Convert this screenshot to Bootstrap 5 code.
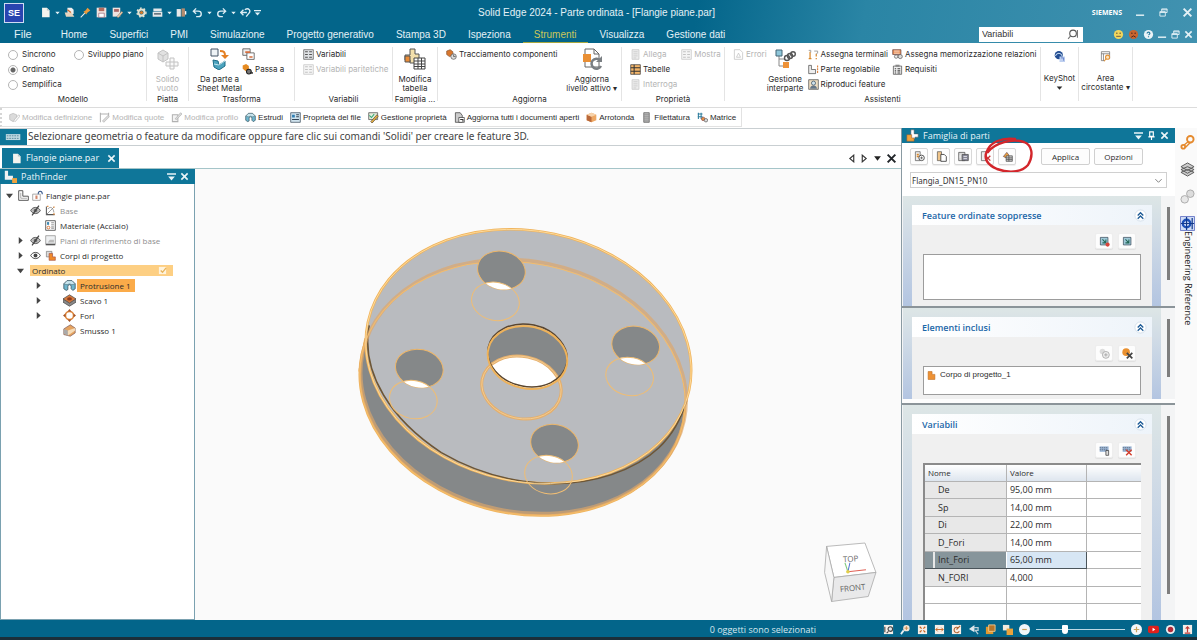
<!DOCTYPE html>
<html lang="it">
<head>
<meta charset="utf-8">
<meta name="viewport" content="width=device-width, initial-scale=1">
<title>Solid Edge 2024 - Parte ordinata - [Flangie piane.par]</title>
<link href="https://cdn.jsdelivr.net/npm/bootstrap@5.3.0/dist/css/bootstrap.min.css" rel="stylesheet">
<script src="https://cdn.jsdelivr.net/npm/bootstrap@5.3.0/dist/js/bootstrap.bundle.min.js"></script>
<style>
:root{--teal:#0f7699;--deep:#03658a;--ui:"Open Sans","Noto Sans",sans-serif;--rib:Inter,"Liberation Sans",sans-serif}
body{font:8px/15px var(--ui);color:#2b2b2b;background:#fff;height:100vh;min-height:600px;overflow:hidden}
svg{display:block;flex:none}
button{font:inherit;color:inherit;background:none;border:0;padding:0;line-height:inherit}
a{color:inherit;text-decoration:none}
.i9{width:9px;height:9px}.i11{width:11px;height:11px}.i13{width:13px;height:13px}.i20{width:22px;height:22px}
.dim{color:#b4b4b4}
.dim svg{opacity:.35;filter:grayscale(1)}
/* title bar */
.topbar{background:linear-gradient(100deg,#03658a 0 58%,#2a85a5 72%,#4192b0 100%);color:#e4f1f6;font-family:"Liberation Sans",sans-serif}
.title-row{height:25px}
.tab-row{height:18px;font-size:10px}
.side{flex:1 1 0}
.logo{width:20px;height:20px;margin-left:4px;background:#2945b0;border:1px solid #cfdcf3;color:#fff;font:bold 9px/19px "Liberation Sans",sans-serif;text-align:center}
.quick{padding-left:13px}
.quick button{width:16px;display:flex;justify-content:center}
.quick .car{width:8px}
.apptitle{font-size:10px;line-height:25px}
.tab-row nav a{padding:0 11px;line-height:19px;height:19px;white-space:nowrap}
.tab-row nav .file{font-size:11px;padding:0 18px 0 14px}
.tab-row nav .on{color:#c9c65a;box-shadow:inset 0 -2px #a9a83f;margin:0 1px}
.search{width:104px;height:15px;background:#fff;margin-right:30px}
.search input{width:84px;border:0;background:none;font:9px/15px "Liberation Sans",sans-serif;color:#333;padding:0 0 0 3px;outline:0}
.siemens{font:bold 7px/15px "Open Sans",sans-serif;color:#fff}
.winbtns{gap:14px}
/* ribbon */
.ribbon{height:65px;font-family:var(--rib);border-bottom:1px solid #dcdcdc;background:#fff}
.grp{display:flex;flex-direction:column;flex:none;margin:4px 0 6px;border-right:1px solid #e4e4e4}
.grp .gbody{height:47px;display:flex;flex:none}
.grp .glabel{flex:none;line-height:10px;text-align:center;white-space:nowrap}
.rowbtn{display:flex;align-items:center;gap:2px;height:15px;line-height:15px;white-space:nowrap}
.bigbtn{display:flex;flex-direction:column;align-items:center;line-height:9px;white-space:nowrap}
.bigbtn svg{margin:1px 0 5px}
.opt{display:flex;align-items:center;gap:4px;height:15px;white-space:nowrap}
.opt input{appearance:none;width:10px;height:10px;margin:0;border:1px solid #b4b4b4;border-radius:50%;background:#fff}
.opt input:checked{background:radial-gradient(#666 0 2px,#fff 3px)}
/* command strip */
.cmds{height:20px;font-family:"Liberation Sans",sans-serif}
.cmds .strip{display:inline-flex;align-items:center;gap:7px;height:19px;padding:1px 5px 0 7px;border:1px solid #e2e2e2;border-top:0;border-left:2px dotted #d5d5d5}
.cmds button{display:flex;align-items:center;gap:2px;white-space:nowrap}
/* prompt & tabs */
.prompt{height:18px;border:1px solid #c9cfd2;border-width:1px 0;font:10px/15px "Noto Sans",sans-serif;color:#444}
.prompt .cap{width:27px;background:var(--teal);margin:0 1px 0 0}
.doctabs{height:23px;padding:2px 4px 0 2px;border-bottom:1px solid #a5c5c9}
.doctab{width:117px;background:var(--teal);color:#e8f4f8;font:9px/20px "Noto Sans",sans-serif;padding:0 3px 0 9px}
.phead{height:15px;background:var(--teal);color:#e8f4f8;font-size:9px;line-height:15px;padding:0 6px 0 4px;flex:none}
/* tree */
.finder{width:195px;border:1px solid #7aa1b0;border-top:0;flex:none;background:#fff}
.finder .phead{margin:0 -1px}
.tree{list-style:none;margin:0;padding:4px 0 0 4px}
.tree li{display:flex;align-items:center;height:15px;gap:4px;white-space:nowrap}
.tree li.l0{gap:3px;margin-left:-1px}
.tree .arr{width:11px;display:flex;justify-content:center;flex:none}
.tree .off{color:#8e8e8e}
.l1{padding-left:10px}.l2{padding-left:28px}
.ordbar{flex:none;width:143px;height:11px;line-height:11px;background:#fdcf83;padding:0 6px 0 2px}
.sel{background:#fbab49;padding:0 4px 0 3px;margin-left:-3px;line-height:13px}
.stage{background:#fafafa}
/* right panel */
.family{width:274px;flex:none;border-left:1px solid #8a9aa2;background:#fdfdfd}
.ptools{padding:5px 8px 8px}
.pick-row{margin-top:7px}
.sq{width:18px;height:17px;border:1px solid #d8d8d8;border-radius:2px;background:#fdfdfd;display:flex;align-items:center;justify-content:center;box-shadow:0 1px 1px #0001}
.wide{width:49px;height:17px;border:1px solid #d0d0d0;border-radius:2px;background:#fdfdfd;line-height:15px;text-align:center}
.wide.last{margin-right:24px}
.combo{width:100%;height:16px;border:1px solid #d0d0d0;background:#fff;font:8px/13px "Noto Sans",sans-serif;color:#333;padding:0 1px;appearance:none}
.sect{display:flex;border-top:2px solid #8b9499;padding-left:1px;background:#f3f4f5}
.sect .well{flex:1;background:linear-gradient(#dde6e6,#d0dbe6 35%,#b3c5e1);padding:9px 9px 0}
.sect .pane{background:#f0f0f0;height:100%;padding:0 11px 4px}
.sect .pane h2{margin:0 -11px;padding:0 5px 0 10px;height:20px;font:600 9px/21px var(--ui);color:#1b67a8;background:linear-gradient(90deg,#fff,#eef4fa);display:flex;justify-content:space-between;align-items:center}
.tools{display:flex;justify-content:flex-end;gap:5px;padding:8px 5px 5px 0}
.tools .sq{border-color:#eee;height:16px}
.lst{border:1px solid #9c9c9c;background:#fff;padding:0 3px;font-family:"Liberation Sans",sans-serif}
.rail{width:14px;display:flex;justify-content:center;padding-top:11px}
.rail i{width:3px;background:#7e7e7e}
.vars{width:100%;table-layout:fixed;border-collapse:collapse;font-size:9px;line-height:15px;background:#fff;border-left:2px solid #8b8b8b;border-top:2px solid #8b8b8b}
.vars th{font-weight:400;font-size:8px;background:linear-gradient(#fff,#dde5ee);height:17px}
.vars th,.vars td{border-right:1px solid #b4b4b4;border-bottom:1px solid #b4b4b4;padding:0 3px}
.vars th:last-child,.vars td:last-child{border-right:0}
.vars td{height:17px}.vars tr:nth-child(even) td{height:18px}
.vars td:first-child{background:#e8e8e8;padding-left:13px}
.vars .void td:first-child{background:#fff}
.vars .pick td{background:#d7e6f4;border:1px solid #4a545a}
.vars .pick td:first-child{background:#87959b;background:linear-gradient(90deg,#87959b 8px,#e8e8e8 8px 10px,#87959b 10px);border-right-color:#fff}
.vars .pick td:last-child{background:#fff;border-color:#b4b4b4;border-right:0}
.dock{width:22px;flex:none;background:#fafafa;padding:7px 0 0 3px}
.vert{writing-mode:vertical-rl;font-size:9px;line-height:12px;white-space:nowrap;color:#222}
/* status */
.status{height:17px;background:var(--deep);padding-top:2px;color:#d7e8ef;font-size:9px;line-height:15px;flex:none}
.status .picks{gap:6px;margin:0 0 0 67px}
.foot{height:3px;background:#1b2f3a;flex:none}
.zoomer{appearance:none;width:89px;height:11px;background:linear-gradient(#bcd9e5,#bcd9e5) center/100% 1px no-repeat;margin:0}
.zoomer::-webkit-slider-thumb{appearance:none;width:6px;height:9px;background:#fff;border-radius:1px 1px 3px 3px}
</style>
</head>
<body class="d-flex flex-column">
<svg width="0" height="0" class="position-absolute" aria-hidden="true">
<symbol id="doc" viewBox="0 0 16 16"><path d="M3 1h7l4 4v10H3z" fill="#f4f4ee"/><path d="M10 1v4h4z" fill="#b9c4c8"/></symbol>
<symbol id="open" viewBox="0 0 16 16"><path d="M5 1h6l3 3v6H5z" fill="#eee"/><path d="M1 8h10l4 6H3z" fill="#e8d4bd"/><path d="M5 4l5 4" stroke="#d06a2d" stroke-width="2"/></symbol>
<symbol id="pin" viewBox="0 0 16 16"><path d="M1 15l6-6" stroke="#eee" stroke-width="1.5"/><path d="M5 7l4 4 2-3 4-3-4-4-3 4z" fill="#eb9b3c"/></symbol>
<symbol id="save" viewBox="0 0 16 16"><path d="M1 1h14v14H1z" fill="#efe3df"/><path d="M4 1h8v5H4z" fill="#b66b5e"/><path d="M4 9h8v6H4z" fill="#fff" stroke="#967" /></symbol>
<symbol id="saveas" viewBox="0 0 16 16"><path d="M1 1h11v13H1z" fill="#efe3df"/><path d="M3 3h7v4H3z" fill="#a66"/><path d="M7 14l7-8 2 2-7 8z" fill="#e9c6a2" stroke="#555" stroke-width=".6"/></symbol>
<symbol id="gear" viewBox="0 0 16 16"><circle cx="8" cy="8" r="4.500" fill="none" stroke="#e6e3d2" stroke-width="3"/><circle cx="8" cy="8" r="6.500" fill="none" stroke="#e6e3d2" stroke-width="2" stroke-dasharray="2.5 3"/><circle cx="8" cy="8" r="2.3" fill="#d97b2a"/></symbol>
<symbol id="print" viewBox="0 0 16 16"><path d="M2 2h12v4H2zM1 7h14v7H1z" fill="#e4e8ea"/><path d="M3 9h10v2H3z" fill="#4a5a66"/></symbol>
<symbol id="book" viewBox="0 0 16 16"><path d="M1 3h6v11H1z" fill="#e9e9e9"/><path d="M8 2h5v12H8z" fill="#b58b6d"/><path d="M13 6h2v5h-2z" fill="#fff"/></symbol>
<symbol id="undo" viewBox="0 0 16 16"><path d="M6 2L2 6l4 4M2 6h7c6 0 6 8 0 8H6" fill="none" stroke="#dcecf3" stroke-width="2"/></symbol>
<symbol id="redo" viewBox="0 0 16 16"><path d="M10 2l4 4-4 4M14 6H7c-6 0-6 8 0 8h3" fill="none" stroke="#dcecf3" stroke-width="2"/></symbol>
<symbol id="loop" viewBox="0 0 16 16"><path d="M5 4L1 8l4 4M1 8h9M7 4c6-4 9 2 6 5l-4 5" fill="none" stroke="#dcecf3" stroke-width="2"/></symbol>
<symbol id="car" viewBox="0 0 8 8"><path d="M1.500 3h5L4 6z" fill="currentColor"/></symbol>
<symbol id="carbar" viewBox="0 0 8 8"><path d="M0 1h8v1.500H0zM1 4h6L4 7.500z" fill="currentColor"/></symbol>
<symbol id="right" viewBox="0 0 8 8"><path d="M2 0l4.500 4L2 8z" fill="#444"/></symbol>
<symbol id="down" viewBox="0 0 8 8"><path d="M0 2h8L4 7z" fill="#444"/></symbol>
<symbol id="x" viewBox="0 0 10 10"><path d="M1.500 1.500l7 7M8.500 1.500l-7 7" stroke="currentColor" stroke-width="1.800"/></symbol>
<symbol id="min" viewBox="0 0 10 10"><path d="M0 8h9" stroke="currentColor" stroke-width="1.600"/></symbol>
<symbol id="rest" viewBox="0 0 10 10"><path d="M3 4V1h6v4H7M1 4h6v5H1zM1 5h6M3 2h6" fill="none" stroke="currentColor"/></symbol>
<symbol id="mag" viewBox="0 0 10 10"><circle cx="5.500" cy="4" r="3" fill="none" stroke="#555"/><path d="M3.500 6L1 9M9.500 1v7" stroke="#777"/></symbol>
<symbol id="flat" viewBox="0 0 22 22"><path d="M1 5l5-3 5 3v6l-5 3-5-3z" fill="#aaa" stroke="#555"/><path d="M1 5l5 3 5-3M6 8v6" fill="none" stroke="#555"/><path d="M13 10h4v4h4v4h-4v3h-4v-3H9v-4h4zM13 14h4v4h-4z" fill="#eee" stroke="#555"/></symbol>
<symbol id="sheet" viewBox="0 0 22 22"><path d="M2 1h7v7H2z" fill="#eef3f6" stroke="#456"/><path d="M11 3c4 0 5 1 5 5" fill="none" stroke="#e48024" stroke-width="2"/><path d="M12 7h8l-4 4z" fill="#e48024"/><path d="M4 12l5 1 1 4 6-4v5l-6 4-5-3z" fill="#4ba3be" stroke="#1c6c87"/><path d="M5 16l5 1 6-4" fill="none" stroke="#bfe3ee"/></symbol>
<symbol id="swap" viewBox="0 0 16 16"><path d="M1 1h9v8H1z" fill="#eee" stroke="#555"/><path d="M6 6h9v8H6z" fill="#fff" stroke="#555"/><path d="M4 5h6M9 11h4" stroke="#d66d3d" stroke-width="2"/></symbol>
<symbol id="passa" viewBox="0 0 16 16"><path d="M1 2l5-2 4 3v6l-4 2-5-4z" fill="#e68b22"/><circle cx="10" cy="11" r="3.500" fill="#777" stroke="#222" stroke-width="1.500"/><path d="M12 13h4" stroke="#222" stroke-width="2"/></symbol>
<symbol id="vari" viewBox="0 0 16 16"><path d="M1 1h14v14H1z" fill="#e0e3e6" stroke="#555"/><path d="M3 4h4M3 8h4M3 12h4M9 4h4M9 8h4M9 12h4" stroke="#555" stroke-width="1.600"/></symbol>
<symbol id="table22" viewBox="0 0 22 22"><path d="M6 1h5v5h4v5h-4v4H6v-3H1V7h5z" fill="#f3e0ac" stroke="#555"/><path d="M1 8h5v6H1z" fill="#e98c38" stroke="#555"/><path d="M10 10h11v11H10z" fill="#fff" stroke="#444"/><path d="M10 13h11M10 16h11M10 18.500h11M14 10v11M17.500 10v11" stroke="#444"/></symbol>
<symbol id="trace" viewBox="0 0 16 16"><path d="M1 3l5-2 4 3v5L5 11 1 8z" fill="#d9772e" stroke="#853"/><circle cx="11" cy="11" r="4" fill="#ddd" stroke="#555"/><path d="M11 8v3h3" fill="none" stroke="#444"/></symbol>
<symbol id="update" viewBox="0 0 22 22"><path d="M4 1h9l5 5v13H4z" fill="#fff" stroke="#666"/><path d="M13 1v5h5" fill="none" stroke="#666"/><path d="M2 6h8v8H2z" fill="#e98f34"/><path d="M19 12a5 5 0 1 0 1 6" fill="none" stroke="#7a7f83" stroke-width="2.500"/><path d="M21 8v6h-6z" fill="#7a7f83"/></symbol>
<symbol id="tab3" viewBox="0 0 16 16"><path d="M1 1h14v14H1z" fill="#f4b66a" stroke="#333"/><path d="M1 5.500h14M1 10.500h14M6 1v14" stroke="#333" stroke-width="1.500"/></symbol>
<symbol id="page" viewBox="0 0 16 16"><path d="M3 1h10v14H3z" fill="#ccc" stroke="#555"/><path d="M5 4h6M5 7h6M5 10h6M5 13h4" stroke="#555"/></symbol>
<symbol id="err" viewBox="0 0 16 16"><path d="M2 1h8l4 4v10H2z" fill="#fff" stroke="#444"/><path d="M5 12l3-6 3 6z" fill="none" stroke="#444"/></symbol>
<symbol id="inter" viewBox="0 0 22 22"><path d="M5 6v12h5M5 11h6" fill="none" stroke="#888"/><path d="M2 2h6v6H2z" fill="#8fc7da" stroke="#467"/><path d="M9 14h6v6H9z" fill="#ee9238"/><circle cx="13" cy="10" r="2.500" fill="none" stroke="#555" stroke-width="1.400"/><circle cx="16" cy="8" r="2.500" fill="none" stroke="#555" stroke-width="1.400"/><circle cx="19" cy="6" r="2.300" fill="none" stroke="#555" stroke-width="1.400"/></symbol>
<symbol id="term" viewBox="0 0 16 16"><path d="M3 4v10M1 14h4M12 7v4M12 13v2" stroke="#d9892c" stroke-width="1.800"/><path d="M1 2h3v3M9 3h5v3l-2 1" fill="none" stroke="#999" stroke-width="1.300"/></symbol>
<symbol id="regol" viewBox="0 0 16 16"><path d="M1 2h4v6h6v6H1z" fill="#eee" stroke="#444"/><path d="M14 2v12" stroke="#d9772e" stroke-width="1.500" stroke-dasharray="3 1"/></symbol>
<symbol id="ripr" viewBox="0 0 16 16"><path d="M1 1h14v14H1z" fill="#f0dfc3" stroke="#444"/><circle cx="8" cy="6" r="3" fill="#cfe2ec" stroke="#345"/><path d="M3 14c0-6 10-6 10 0" fill="#678"/></symbol>
<symbol id="memo" viewBox="0 0 16 16"><path d="M1 1h12v7H1z" fill="#e98c52" stroke="#644"/><path d="M3 3h8M3 6h8" stroke="#fff"/><circle cx="6" cy="11" r="2.500" fill="#eee" stroke="#555"/><circle cx="12" cy="11" r="3" fill="#ddd" stroke="#555"/></symbol>
<symbol id="req" viewBox="0 0 16 16"><path d="M2 3h12v12H2z" fill="#eee" stroke="#444"/><path d="M5 1h6v3H5z" fill="#888"/><path d="M4 7h2M4 10h2M4 13h2M8 7h4M8 10h4M8 13h4" stroke="#444" stroke-width="1.500"/></symbol>
<symbol id="ks" viewBox="0 0 16 16"><circle cx="7" cy="6" r="6" fill="#234d92"/><path d="M2 7c3-5 7-5 10 0" fill="none" stroke="#cfe2f5" stroke-width="1.500"/><path d="M8 8h8v8H8z" fill="#bfd0f0"/><path d="M10 10h4v4" fill="none" stroke="#46b"/></symbol>
<symbol id="area" viewBox="0 0 16 16"><path d="M2 1h12v10M2 1v13h5M2 4h12M5 4v10" fill="none" stroke="#666"/><circle cx="11" cy="9" r="3" fill="#fbe5c3" stroke="#e29236" stroke-width="1.500"/><path d="M9 11l-3 4" stroke="#e29236" stroke-width="1.500"/></symbol>
<symbol id="edit" viewBox="0 0 16 16"><path d="M1 4l5-2 5 2v7l-5 3-5-3z" fill="#999" stroke="#333"/><path d="M7 12l7-8 2 2-7 8z" fill="#eee" stroke="#333"/></symbol>
<symbol id="editq" viewBox="0 0 16 16"><path d="M2 1v14M14 1v6M2 3h12" fill="none" stroke="#222" stroke-width="1.500"/><path d="M5 13l8-8 2 2-8 8z" fill="#999" stroke="#222"/></symbol>
<symbol id="editp" viewBox="0 0 16 16"><path d="M2 4h8v10H2z" fill="#ddd" stroke="#222" stroke-width="1.500"/><path d="M6 10l8-9 2 2-8 8z" fill="#999" stroke="#222"/></symbol>
<symbol id="estr" viewBox="0 0 16 16"><path d="M1 6l4-4h6l4 4v6l-3 2-2-2V9a2 2 0 0 0-4 0v4l-2 1-3-2z" fill="#6fb7cf" stroke="#3b5560"/><path d="M1 6l4-4h6l4 4-4 1q-3-2-6 0z" fill="#c8e5ee" stroke="#3b5560" stroke-width=".6"/></symbol>
<symbol id="prop" viewBox="0 0 16 16"><path d="M1 1h14v14H1z" fill="#cfe3ee" stroke="#345"/><path d="M3 4h4v4H3z" fill="#2f7fb5"/><path d="M9 4h4M9 7h4M3 11h10" stroke="#345" stroke-width="1.500"/></symbol>
<symbol id="gest" viewBox="0 0 16 16"><path d="M1 1h13v10H1z" fill="#e5ecda" stroke="#444"/><path d="M4 14l9-10 2 2-9 10z" fill="#e7b343" stroke="#543"/><path d="M2 5l3 3 4-5" fill="none" stroke="#3a7" stroke-width="1.500"/></symbol>
<symbol id="refr" viewBox="0 0 16 16"><path d="M2 1h7l3 4v10H2z" fill="#ccc" stroke="#333"/><path d="M7 8h8v7H7z" fill="#fff" stroke="#333"/><path d="M9 11h4v3" fill="none" stroke="#333" stroke-width="1.500"/></symbol>
<symbol id="round" viewBox="0 0 16 16"><path d="M1 4l7-3 7 3v8l-7 3-7-3z" fill="#eda763"/><path d="M1 4l7 3v8l-7-3z" fill="#b9683a"/><path d="M1 4l7-3 7 3-7 3z" fill="#f6d3ac"/></symbol>
<symbol id="fil" viewBox="0 0 16 16"><path d="M4 1h8v14H4z" fill="#b8b8b8" stroke="#555"/><path d="M4 4h8M4 7h8M4 10h8M4 13h8" stroke="#888"/></symbol>
<symbol id="matr" viewBox="0 0 16 16"><path d="M2 1v9M6 1v9M1 3h7M1 7h7" stroke="#2d7d9d" stroke-width="1.500"/><circle cx="9" cy="10" r="2.500" fill="#e99544" stroke="#844"/><circle cx="13" cy="12" r="2.500" fill="#ddd" stroke="#555"/></symbol>
<symbol id="fam" viewBox="0 0 16 16"><path d="M6 1h4v5h5v4h-4v2H6z" fill="#fff" stroke="#555" stroke-width=".6"/><path d="M1 7h6v4h3v4H1z" fill="#f0a33e" stroke="#853" stroke-width=".6"/></symbol>
<symbol id="pf" viewBox="0 0 16 16"><path d="M1 1h4v6h6v5H1z" fill="#f2f2f2"/><path d="M10 10h6v6h-6z" fill="#f0a33e"/></symbol>
<symbol id="part" viewBox="0 0 16 16"><path d="M1 1h6v8h8v6H1z" fill="#fff" stroke="#555" stroke-width="1.400"/><path d="M4 4v8h9" fill="none" stroke="#888"/></symbol>
<symbol id="lock" viewBox="0 0 16 16"><path d="M1 6h11v9H1z" fill="#fff" stroke="#888"/><path d="M5 8h3v5H5z" fill="#d2886d"/><path d="M9 6c0-6 6-5 6 0" fill="none" stroke="#358" stroke-width="1.500"/></symbol>
<symbol id="eye" viewBox="0 0 16 16"><path d="M1 8c3-6 11-6 14 0-3 6-11 6-14 0z" fill="#fff" stroke="#444" stroke-width="1.400"/><circle cx="8" cy="8" r="2.800" fill="#444"/></symbol>
<symbol id="eyeoff" viewBox="0 0 16 16"><path d="M1 8c3-6 11-6 14 0-3 6-11 6-14 0z" fill="#bbb" stroke="#555" stroke-width="1.400"/><circle cx="8" cy="8" r="2.500" fill="#666"/><path d="M3 15L13 1" stroke="#444" stroke-width="1.800"/></symbol>
<symbol id="base" viewBox="0 0 16 16"><path d="M2 2v12h12" fill="none" stroke="#555" stroke-width="1.500"/><path d="M2 14L13 3M4 6c4-5 8-2 9 5" fill="none" stroke="#777"/><path d="M12 2h2v2h-2zM12 12h2v2h-2zM3 1h2v2H3z" fill="#e08a3c"/></symbol>
<symbol id="mat" viewBox="0 0 16 16"><path d="M1 1h14v14H1z" fill="#fff" stroke="#555" stroke-width="1.300"/><path d="M3 3h3v4H3z" fill="#3b86b0"/><circle cx="5" cy="11" r="2" fill="none" stroke="#d66d2d" stroke-width="1.300"/><path d="M9 4h4M9 7h4M9 10h4M9 12h4" stroke="#666"/></symbol>
<symbol id="plane" viewBox="0 0 16 16"><path d="M1 1h14v12H1z" fill="#eef0f2" stroke="#888"/><path d="M1 14h14" stroke="#555" stroke-width="2"/><path d="M7 7h6v4H4z" fill="#bbb"/></symbol>
<symbol id="bodies" viewBox="0 0 16 16"><path d="M2 2h8v8H2z" fill="#ddd" stroke="#777"/><path d="M6 5h5v5h4v5H6z" fill="#ef8a2b" stroke="#a54"/></symbol>
<symbol id="body1" viewBox="0 0 16 16"><path d="M2 1h7v5h5v9H2z" fill="#ee9234" stroke="#b96a20"/></symbol>
<symbol id="scavo" viewBox="0 0 16 16"><path d="M0 6v4l8 5 8-5V6l-8 5z" fill="#8a8a8a" stroke="#555"/><path d="M0 6l8-5 8 5-8 5z" fill="#d9793c" stroke="#555"/><ellipse cx="8" cy="6" rx="3" ry="2" fill="#8f3d1b"/></symbol>
<symbol id="fori" viewBox="0 0 16 16"><circle cx="8" cy="8" r="5" fill="#fff" stroke="#e0893e" stroke-width="2"/><path d="M8 0l2.500 3h-5zM8 16l2.500-3h-5zM0 8l3-2.500v5zM16 8l-3-2.500v5z" fill="#a5562a"/></symbol>
<symbol id="smus" viewBox="0 0 16 16"><path d="M1 6l8-5 6 4v6l-6 4-8-2z" fill="#e5a360" stroke="#755" stroke-width=".8"/><path d="M1 6l5 2v6l-5-2z" fill="#aaa"/><path d="M6 8l9-3v3l-9 6z" fill="#f6dcb8"/></symbol>
<symbol id="kbd" viewBox="0 0 20 10"><path d="M1 1h17v7H1z" fill="#bfd9e2"/><path d="M2 3h15M2 6h15" stroke="#4e7f92" stroke-dasharray="2 1"/></symbol>
<symbol id="dup" viewBox="0 0 16 16"><path d="M2 1h7v13H2z" fill="#eee" stroke="#555"/><path d="M4 5h3M4 8h3" stroke="#d9892c" stroke-width="2"/><circle cx="11" cy="10" r="4" fill="#fff" stroke="#444" stroke-width="1.300"/><path d="M11 8v4M9 10h4" stroke="#444"/></symbol>
<symbol id="cpy" viewBox="0 0 16 16"><path d="M2 1h6v13H2z" fill="#f0c58a" stroke="#555"/><path d="M7 5h5l3 3v7H7z" fill="#fff" stroke="#444" stroke-width="1.300"/></symbol>
<symbol id="ren" viewBox="0 0 16 16"><path d="M1 2h9v12H1z" fill="#ddd" stroke="#444"/><path d="M6 5h9v9H6z" fill="#889" stroke="#444"/><path d="M3 6v4M8 8h5M8 11h5" stroke="#fff"/></symbol>
<symbol id="delv" viewBox="0 0 16 16"><path d="M2 1h7v13H2z" fill="#eee" stroke="#555"/><path d="M8 7l7 7M15 7l-7 7" stroke="#c33" stroke-width="2"/></symbol>
<symbol id="fillp" viewBox="0 0 16 16"><path d="M2 8l5-6 3 4-2 5z" fill="#f0a33e" stroke="#644"/><path d="M6 7h9v8H6z" fill="#ccc" stroke="#444"/><path d="M6 10h9M6 12.500h9M10 7v8" stroke="#444"/></symbol>
<symbol id="chev" viewBox="0 0 14 14"><circle cx="7" cy="7" r="6" fill="#fff" stroke="#d3dfea"/><path d="M4 7l3-3 3 3M4 10.500l3-3 3 3" fill="none" stroke="#1b5a96" stroke-width="1.400"/></symbol>
<symbol id="sup" viewBox="0 0 16 16"><path d="M2 2h11v11H2z" fill="#9fc8d8" stroke="#345"/><path d="M5 5l5 5M10 5v5H5" fill="none" stroke="#265" stroke-width="1.500"/></symbol>
<symbol id="supx" viewBox="0 0 16 16"><path d="M2 2h11v11H2z" fill="#9fc8d8" stroke="#345"/><path d="M5 5l5 5M10 5v5H5" fill="none" stroke="#265" stroke-width="1.500"/><circle cx="12.500" cy="12.500" r="3" fill="#d8443a"/></symbol>
<symbol id="bodyx" viewBox="0 0 16 16"><circle cx="6" cy="6" r="5.500" fill="#e9902f"/><path d="M7 7l8 8M15 7l-8 8" stroke="#444" stroke-width="2.500"/></symbol>
<symbol id="bodyadd" viewBox="0 0 16 16"><circle cx="5" cy="5" r="4" fill="#ddd"/><circle cx="10" cy="10" r="5" fill="#eee" stroke="#999"/><path d="M10 7.500v5M7.500 10h5" stroke="#999"/></symbol>
<symbol id="vin" viewBox="0 0 16 16"><path d="M1 2h13v8H1z" fill="#9db7d6"/><path d="M1 4h12M1 7h12" stroke="#456" stroke-dasharray="2 1"/><path d="M10 8h4v7h-4z" fill="#ddd" stroke="#333"/></symbol>
<symbol id="vdel" viewBox="0 0 16 16"><path d="M1 2h13v8H1z" fill="#9db7d6"/><path d="M1 4h12M1 7h12" stroke="#456" stroke-dasharray="2 1"/><path d="M6 7l8 8M14 7l-8 8" stroke="#d33b2a" stroke-width="2"/></symbol>
<symbol id="link" viewBox="0 0 16 16"><circle cx="11" cy="4.500" r="3.500" fill="none" stroke="#e58a2e" stroke-width="2"/><circle cx="3.500" cy="12.500" r="2" fill="none" stroke="#e58a2e" stroke-width="2"/><path d="M4 11l5-4M6 13l5-5" stroke="#e58a2e" stroke-width="1.500"/></symbol>
<symbol id="layers" viewBox="0 0 16 16"><path d="M1 11l7-3 7 3-7 4zM1 8l7-3 7 3-7 4zM1 5l7-4 7 4-7 4z" fill="#ccc" stroke="#555"/></symbol>
<symbol id="sens" viewBox="0 0 16 16"><circle cx="11" cy="5" r="4" fill="#ddd" stroke="#aaa"/><circle cx="5" cy="11" r="4" fill="#e7e7e7" stroke="#aaa"/></symbol>
<symbol id="engref" viewBox="0 0 16 16"><path d="M.5.500h15v15H.5z" fill="#cfdcf6" stroke="#6b7bc8"/><circle cx="7" cy="8" r="4" fill="none" stroke="#1c50b8" stroke-width="2.500"/><path d="M7 1v14M1 8h14M13 2v12" stroke="#123a8c" stroke-width="1.300"/></symbol>
<symbol id="wq" viewBox="0 0 12 12"><path d="M1 1h10v10H1z" fill="#f5efe8"/><path d="M3 3l2 2M9 3L7 5M3 9l2-2M9 9L7 7" stroke="#c7611e" stroke-width="1.300"/></symbol>
<symbol id="fitw" viewBox="0 0 12 12"><path d="M1 1h10v10H1z" fill="#f5efe8"/><path d="M2 6h8M4 4L2 6l2 2M8 4l2 2-2 2" fill="none" stroke="#c7611e"/></symbol>
<symbol id="magp" viewBox="0 0 12 12"><path d="M1 1h10v10H1z" fill="#f5efe8"/><circle cx="8" cy="5.500" r="2.500" fill="#dfe6ea" stroke="#444" stroke-width="1.200"/><path d="M6 8l-2 2M2 3v6" stroke="#444" stroke-width="1.200"/></symbol>
<symbol id="rotv" viewBox="0 0 12 12"><path d="M1 1h10v10H1z" fill="#f5efe8"/><path d="M8 4a3 3 0 1 0 1 4M6 6l4-4" fill="none" stroke="#b0622e" stroke-width="1.200"/></symbol>
<symbol id="magw" viewBox="0 0 12 12"><circle cx="7" cy="4.500" r="3.500" fill="#f7e7d6"/><path d="M5 4.500h4M7 2.500v4" stroke="#c98a4c"/><path d="M4 7L1 11" stroke="#e6eef1" stroke-width="2"/></symbol>
<symbol id="cubes" viewBox="0 0 12 12"><path d="M1 3h8v8H1z" fill="#e2992f"/><path d="M4 1h7v7H4z" fill="#b5752a" stroke="#f1c98e"/></symbol>
<symbol id="cubes2" viewBox="0 0 12 12"><path d="M1 1h7v6H1z" fill="#f1eadf"/><path d="M5 5h7v7H5z" fill="#eba33b"/></symbol>
<symbol id="arrl" viewBox="0 0 12 12"><path d="M7 1L1 5.500 7 9z" fill="#dfe9ee"/><path d="M6 4h5v3H8l3 4" fill="none" stroke="#b9cdd6" stroke-width="1.400"/></symbol>
</svg>

<header class="topbar flex-shrink-0">
  <div class="title-row d-flex align-items-center">
    <div class="side d-flex align-items-center">
      <div class="logo">SE</div>
      <div class="quick d-flex align-items-center" id="quick"></div>
    </div>
    <div class="apptitle">Solid Edge 2024 - Parte ordinata - [Flangie piane.par]</div>
    <div class="side winbtns d-flex align-items-center justify-content-end pe-1">
      <span class="siemens">SIEMENS</span>
      <button aria-label="Riduci"><svg class="i9"><use href="#min"/></svg></button>
      <button aria-label="Ripristina"><svg class="i9"><use href="#rest"/></svg></button>
      <button aria-label="Chiudi"><svg class="i11"><use href="#x"/></svg></button>
    </div>
  </div>
  <div class="tab-row d-flex align-items-center">
    <nav class="d-flex me-auto">
      <a href="#" class="file">File</a><a href="#">Home</a><a href="#">Superfici</a><a href="#">PMI</a><a href="#">Simulazione</a><a href="#">Progetto generativo</a><a href="#">Stampa 3D</a><a href="#">Ispeziona</a><a href="#" class="on">Strumenti</a><a href="#">Visualizza</a><a href="#">Gestione dati</a>
    </nav>
    <div class="search d-flex align-items-center"><input type="text" value="Variabili" aria-label="Cerca comando"><svg class="i11 ms-1"><use href="#mag"/></svg></div>
    <div class="d-flex align-items-center gap-1 pe-1">
      <svg class="i11" viewBox="0 0 12 12"><circle cx="6" cy="6" r="5" fill="#f1d65c"/><path d="M3.500 8h5" fill="none" stroke="#654"/><circle cx="4.200" cy="4.500" r=".8" fill="#543"/><circle cx="7.800" cy="4.500" r=".8" fill="#543"/></svg>
      <svg class="i11" viewBox="0 0 12 12"><circle cx="6" cy="6" r="5" fill="#c8652f"/><path d="M3.500 9q2.500-3 5 0" fill="none" stroke="#422"/><circle cx="4.200" cy="4.500" r=".8" fill="#422"/><circle cx="7.800" cy="4.500" r=".8" fill="#422"/></svg>
      <svg class="i11" viewBox="0 0 12 12"><circle cx="6" cy="6" r="5" fill="#eaf3f7"/><path d="M4.500 5q0-1.500 1.500-1.500T7.500 5Q7 6 6 6.500M6 8v1" fill="none" stroke="#2a7ca0" stroke-width="1.300"/></svg>
      <svg class="i9"><use href="#min"/></svg><svg class="i9"><use href="#rest"/></svg><svg class="i9"><use href="#x"/></svg>
    </div>
  </div>
</header>

<section class="ribbon d-flex flex-shrink-0" aria-label="Strumenti">
  <div class="grp" style="width:147px"><div class="gbody ps-2">
      <div class="pe-2 me-1">
        <label class="opt"><input type="radio" name="amb">Sincrono</label>
        <label class="opt"><input type="radio" name="amb" checked>Ordinato</label>
        <label class="opt"><input type="radio" name="amb">Semplifica</label>
      </div>
      <label class="opt"><input type="radio" name="amb">Sviluppo piano</label>
    </div><div class="glabel">Modello</div></div>
  <div class="grp" style="width:42px"><div class="gbody justify-content-center"><button class="bigbtn dim"><svg class="i20"><use href="#flat"/></svg>Solido<br>vuoto</button></div><div class="glabel">Piatta</div></div>
  <div class="grp" style="width:106px"><div class="gbody ps-1"><button class="bigbtn ms-1"><svg class="i20"><use href="#sheet"/></svg>Da parte a<br>Sheet Metal</button>
      <div><button class="rowbtn"><svg class="i13"><use href="#swap"/></svg></button><button class="rowbtn"><svg class="i11"><use href="#passa"/></svg>Passa a</button></div></div><div class="glabel">Trasforma</div></div>
  <div class="grp" style="width:98px"><div class="gbody ps-2"><div><button class="rowbtn"><svg class="i11"><use href="#vari"/></svg>Variabili</button><button class="rowbtn dim"><svg class="i11"><use href="#vari"/></svg>Variabili paritetiche</button></div></div><div class="glabel">Variabili</div></div>
  <div class="grp" style="width:45px"><div class="gbody justify-content-center"><button class="bigbtn"><svg class="i20"><use href="#table22"/></svg>Modifica<br>tabella</button></div><div class="glabel">Famiglia ...</div></div>
  <div class="grp" style="width:184px"><div class="gbody ps-2 justify-content-between pe-1"><button class="rowbtn"><svg class="i11"><use href="#trace"/></svg>Tracciamento componenti</button>
      <button class="bigbtn"><svg class="i20"><use href="#update"/></svg>Aggiorna<br>livello attivo ▾</button></div><div class="glabel">Aggiorna</div></div>
  <div class="grp" style="width:103px"><div class="gbody ps-2"><div><button class="rowbtn dim"><svg class="i11"><use href="#page"/></svg>Allega</button><button class="rowbtn"><svg class="i11"><use href="#tab3"/></svg>Tabelle</button><button class="rowbtn dim"><svg class="i11"><use href="#page"/></svg>Interroga</button></div>
      <div class="ms-1"><button class="rowbtn dim"><svg class="i11"><use href="#vari"/></svg>Mostra</button></div></div><div class="glabel">Proprietà</div></div>
  <div class="grp" style="width:316px"><div class="gbody ps-2"><button class="rowbtn dim"><svg class="i11"><use href="#err"/></svg>Errori</button>
      <button class="bigbtn"><svg class="i20"><use href="#inter"/></svg>Gestione<br>interparte</button>
      <div class="ms-1"><button class="rowbtn"><svg class="i11"><use href="#term"/></svg>Assegna terminali</button><button class="rowbtn"><svg class="i11"><use href="#regol"/></svg>Parte regolabile</button><button class="rowbtn"><svg class="i11"><use href="#ripr"/></svg>Riproduci feature</button></div>
      <div class="ms-1"><button class="rowbtn"><svg class="i11"><use href="#memo"/></svg>Assegna memorizzazione relazioni</button><button class="rowbtn"><svg class="i11"><use href="#req"/></svg>Requisiti</button></div></div><div class="glabel">Assistenti</div></div>
  <div class="grp" style="width:38px"><div class="gbody justify-content-center"><button class="bigbtn"><svg class="i11 mt-1 mb-2"><use href="#ks"/></svg><span class="mt-1">KeyShot</span><svg class="i9 m-0"><use href="#car"/></svg></button></div></div>
  <div class="grp" style="width:54px"><div class="gbody justify-content-center"><button class="bigbtn"><svg class="i11 mt-1 mb-2"><use href="#area"/></svg><span class="mt-1">Area<br>circostante ▾</span></button></div></div>
</section>

<div class="cmds flex-shrink-0"><div class="strip">
  <button class="dim"><svg class="i11"><use href="#edit"/></svg>Modifica definizione</button>
  <button class="dim"><svg class="i11"><use href="#editq"/></svg>Modifica quote</button>
  <button class="dim"><svg class="i11"><use href="#editp"/></svg>Modifica profilo</button>
  <button><svg class="i11"><use href="#estr"/></svg>Estrudi</button>
  <button><svg class="i11"><use href="#prop"/></svg>Proprietà del file</button>
  <button><svg class="i11"><use href="#gest"/></svg>Gestione proprietà</button>
  <button><svg class="i11"><use href="#refr"/></svg>Aggiorna tutti i documenti aperti</button>
  <button><svg class="i11"><use href="#round"/></svg>Arrotonda</button>
  <button><svg class="i11"><use href="#fil"/></svg>Filettatura</button>
  <button><svg class="i11"><use href="#matr"/></svg>Matrice</button>
</div></div>

<main class="d-flex flex-grow-1" style="min-height:0">
  <div class="d-flex flex-column flex-grow-1" style="min-width:0">
    <div class="prompt d-flex"><div class="cap d-flex align-items-center justify-content-center"><svg width="17" height="9"><use href="#kbd"/></svg></div>Selezionare geometria o feature da modificare oppure fare clic sui comandi 'Solidi' per creare le feature 3D.</div>
    <div class="doctabs d-flex">
      <div class="doctab d-flex align-items-center"><svg class="i11 me-1"><use href="#doc"/></svg>Flangie piane.par<button class="ms-auto" aria-label="Chiudi documento"><svg class="i9"><use href="#x"/></svg></button></div>
      <div class="ms-auto d-flex align-items-center gap-1">
        <svg class="i9" viewBox="0 0 8 8"><path d="M6 1v6L2.500 4z" fill="none" stroke="#333"/></svg>
        <svg class="i9" viewBox="0 0 8 8"><path d="M2 1v6l3.500-3z" fill="none" stroke="#333"/></svg>
        <svg class="i9" viewBox="0 0 8 8"><path d="M1 2h6L4 6z" fill="#222"/></svg>
        <svg class="i11 text-dark"><use href="#x"/></svg>
      </div>
    </div>
    <div class="d-flex flex-grow-1" style="min-height:0">
      <aside class="finder">
        <div class="phead d-flex align-items-center"><svg class="i13"><use href="#pf"/></svg><span class="ms-1">PathFinder</span><svg class="i9 ms-auto me-1"><use href="#carbar"/></svg><svg class="i9"><use href="#x"/></svg></div>
        <ul class="tree">
          <li class="l0"><span class="arr"><svg width="7" height="7"><use href="#down"/></svg></span><svg class="i11"><use href="#part"/></svg><svg class="i11"><use href="#lock"/></svg><span>Flangie piane.par</span></li>
          <li class="l1 off"><span class="arr"></span><svg class="i11"><use href="#eyeoff"/></svg><svg class="i11"><use href="#base"/></svg>Base</li>
          <li class="l1"><span class="arr"></span><span class="i11"></span><svg class="i11"><use href="#mat"/></svg>Materiale (Acciaio)</li>
          <li class="l1 off"><span class="arr"><svg width="7" height="7"><use href="#right"/></svg></span><svg class="i11"><use href="#eyeoff"/></svg><svg class="i11"><use href="#plane"/></svg>Piani di riferimento di base</li>
          <li class="l1"><span class="arr"><svg width="7" height="7"><use href="#right"/></svg></span><svg class="i11"><use href="#eye"/></svg><svg class="i11"><use href="#bodies"/></svg>Corpi di progetto</li>
          <li class="l1"><span class="arr"><svg width="7" height="7"><use href="#down"/></svg></span><span class="ordbar d-flex align-items-center">Ordinato<svg class="i9 ms-auto" viewBox="0 0 10 10"><path d="M1 1h8v8H1z" fill="#fff3dc"/><path d="M3 5l2 2 4-5" fill="none" stroke="#e8b45c" stroke-width="1.500"/></svg></span></li>
          <li class="l2"><span class="arr"><svg width="7" height="7"><use href="#right"/></svg></span><span class="i11"></span><svg class="i13"><use href="#estr"/></svg><span class="sel">Protrusione 1</span></li>
          <li class="l2"><span class="arr"><svg width="7" height="7"><use href="#right"/></svg></span><span class="i11"></span><svg class="i13"><use href="#scavo"/></svg>Scavo 1</li>
          <li class="l2"><span class="arr"><svg width="7" height="7"><use href="#right"/></svg></span><span class="i11"></span><svg class="i13"><use href="#fori"/></svg>Fori</li>
          <li class="l2"><span class="arr"></span><span class="i11"></span><svg class="i13"><use href="#smus"/></svg>Smusso 1</li>
        </ul>
      </aside>
      <div class="stage flex-grow-1" style="min-width:0">
        <svg width="100%" height="100%" viewBox="196 169 705 450" role="img" aria-label="Flangia">
          <defs>
            <ellipse id="big" rx="164" ry="125" transform="rotate(12)"/>
            <ellipse id="mid" rx="40" ry="31" transform="rotate(12)"/>
            <ellipse id="bolt" rx="24" ry="19" transform="rotate(12)"/>
            <clipPath id="cm"><use href="#mid" x="528" y="357"/></clipPath>
            <clipPath id="cb"><use href="#bolt"/></clipPath>
            <g id="hole"><use href="#bolt" fill="#858889" stroke="#edb669"/><g clip-path="url(#cb)"><use href="#bolt" x="-6" y="31" fill="#fff"/></g><use href="#bolt" x="-6" y="31" fill="none" stroke="#efbd74"/></g>
          </defs>
          <path d="M365.500 338L359.500 369L685 405L691.500 374z" fill="#858889"/>
          <use href="#big" x="523" y="388" fill="#858889" stroke="#f0b45c" stroke-width="2.500"/>
          <path d="M365.500 338L359.500 371M691.500 374L686 405" stroke="#f0b45c"/>
          <use href="#big" x="529" y="356" fill="#b9bbbf" stroke="#f0b45c" stroke-width="2.500"/>
          <path d="M370 325C361 373 393 420 442 452C490 480 555 493 612 474C650 461 675 440 687 400" fill="none" stroke="#6d5636" stroke-width="1.500"/>
          <g fill="none"><use href="#big" x="524" y="386" stroke="#dfa76a" stroke-width="3.500" opacity=".65"/><use href="#big" x="523" y="388" stroke="#f3bc6c"/><use href="#big" x="529" y="356" stroke="#ffe0a6" stroke-width=".8"/></g>
          <use href="#hole" x="502" y="270"/><use href="#hole" x="420" y="368"/><use href="#hole" x="636" y="345"/><use href="#hole" x="555" y="443"/>
          <use href="#mid" x="528" y="357" fill="#858889"/>
          <g clip-path="url(#cm)"><use href="#mid" x="523" y="387" fill="#fff"/></g>
          <use href="#mid" x="522" y="387" fill="none" stroke="#e5af6c" stroke-width="3"/><use href="#mid" x="522" y="387" fill="none" stroke="#f3cf98" stroke-width=".8"/>
          <use href="#mid" x="528" y="355" fill="none" stroke="#5a4630" stroke-width="1.500"/><use href="#mid" x="528" y="357" fill="none" stroke="#eeb25a" stroke-width="2"/>
          <g stroke="#aaa" stroke-width=".8"><path d="M826.700 545.700L865 542.300 876 571.700 834 576.700z" fill="#fff"/><path d="M834 576.700L876 571.700 868.300 595.700 831.700 600.700z" fill="#e9e9ea"/><path d="M826.700 545.700L834 576.700 831.700 600.700 824.700 571.700z" fill="#f7f7f7"/></g>
          <g fill="#666" font-family="Open Sans,sans-serif" text-anchor="middle"><text font-size="8" transform="translate(851 561) rotate(-4)">TOP</text><text font-size="8" transform="translate(853 590) rotate(-6)">FRONT</text></g>
          <path d="M848 571l-3-9" stroke="#7fc97a"/><path d="M848 571l2-9" stroke="#4c6fd0"/><path d="M848 571l18-2" stroke="#e06055"/><circle cx="848" cy="571" r="1.800" fill="#e2d04a"/>
        </svg>
      </div>
    </div>
  </div>

  <aside class="family d-flex flex-column">
    <div class="phead d-flex align-items-center"><svg class="i13 me-1"><use href="#fam"/></svg>Famiglia di parti<svg class="i9 ms-auto"><use href="#carbar"/></svg><svg class="i9 mx-1" viewBox="0 0 10 10"><path d="M3 1h4v5H3zM1.500 6.500h7M5 6v4" fill="none" stroke="#fff" stroke-width="1.300"/></svg><svg class="i9"><use href="#x"/></svg></div>
    <div class="ptools bg-white flex-shrink-0">
      <div class="d-flex align-items-center gap-1 position-relative">
        <button class="sq" aria-label="Nuovo membro"><svg class="i11"><use href="#dup"/></svg></button>
        <button class="sq" aria-label="Copia membro"><svg class="i11"><use href="#cpy"/></svg></button>
        <button class="sq" aria-label="Rinomina membro"><svg class="i11"><use href="#ren"/></svg></button>
        <button class="sq" aria-label="Elimina membro"><svg class="i11"><use href="#delv"/></svg></button>
        <button class="sq" aria-label="Compila membri"><svg class="i11"><use href="#fillp"/></svg></button>
        <button class="wide ms-auto">Applica</button><button class="wide last">Opzioni</button>
        <svg class="position-absolute" style="left:72px;top:-11px" width="54" height="40" viewBox="982 137 54 40"><path d="M1015 139C1001 137 990 143 987 151C983 159 988 165 997 169C1008 173 1021 173 1028 165C1034 155 1032 145 1024 142C1012 138 995 143 988 152" fill="none" stroke="#d3262b" stroke-width="2.400" stroke-linecap="round"/></svg>
      </div>
      <div class="pick-row position-relative d-flex align-items-center"><select class="combo" aria-label="Membro della famiglia"><option>Flangia_DN15_PN10</option></select><svg class="position-absolute end-0 me-1" width="9" height="9" viewBox="0 0 10 10"><path d="M1.500 3.500L5 7l3.500-3.500" fill="none" stroke="#777"/></svg></div>
    </div>
    <section class="sect flex-shrink-0 border-top-0" style="height:110px"><div class="well"><div class="pane"><h2>Feature ordinate soppresse<svg class="i13"><use href="#chev"/></svg></h2>
      <div class="tools"><button class="sq" aria-label="Sopprimi"><svg class="i11"><use href="#supx"/></svg></button><button class="sq" aria-label="Ripristina feature"><svg class="i11"><use href="#sup"/></svg></button></div>
      <div class="lst" style="height:46px"></div></div></div><div class="rail"><i style="height:73px"></i></div></section>
    <section class="sect flex-shrink-0 mb-1" style="height:93px"><div class="well"><div class="pane"><h2>Elementi inclusi<svg class="i13"><use href="#chev"/></svg></h2>
      <div class="tools"><button class="sq" aria-label="Includi"><svg class="i11"><use href="#bodyadd"/></svg></button><button class="sq" aria-label="Escludi"><svg class="i11"><use href="#bodyx"/></svg></button></div>
      <div class="lst d-flex" style="height:29px"><svg class="i9 mt-1 me-1"><use href="#body1"/></svg>Corpo di progetto_1</div></div></div><div class="rail"><i style="height:58px"></i></div></section>
    <section class="sect flex-grow-1 overflow-hidden" style="min-height:0"><div class="well"><div class="pane"><h2>Variabili<svg class="i13"><use href="#chev"/></svg></h2>
      <div class="tools"><button class="sq" aria-label="Inserisci variabile"><svg class="i11"><use href="#vin"/></svg></button><button class="sq" aria-label="Rimuovi variabile"><svg class="i11"><use href="#vdel"/></svg></button></div>
      <table class="vars"><colgroup><col style="width:38%"><col style="width:37%"><col></colgroup>
        <thead><tr><th>Nome</th><th>Valore</th><th></th></tr></thead>
        <tbody>
        <tr><td>De</td><td>95,00 mm</td><td></td></tr><tr><td>Sp</td><td>14,00 mm</td><td></td></tr><tr><td>Di</td><td>22,00 mm</td><td></td></tr><tr><td>D_Fori</td><td>14,00 mm</td><td></td></tr><tr class="pick"><td>Int_Fori</td><td>65,00 mm</td><td></td></tr><tr><td>N_FORI</td><td>4,000</td><td></td></tr><tr class="void"><td></td><td></td><td></td></tr>
        <tr class="void"><td></td><td></td><td></td></tr></tbody></table></div></div><div class="rail"><i style="height:178px"></i></div></section>
  </aside>
  <aside class="dock d-flex flex-column align-items-center">
    <svg width="15" height="15" class="mb-2"><use href="#link"/></svg><svg width="15" height="15" class="mt-1 mb-2"><use href="#layers"/></svg><svg width="15" height="15" class="mt-1 mb-2"><use href="#sens"/></svg><svg width="15" height="15" class="mt-1"><use href="#engref"/></svg>
    <a href="#" class="vert">Engineering Reference</a>
  </aside>
</main>
<footer class="status d-flex align-items-center">
  <span class="ms-auto">0 oggetti sono selezionati</span>
  <div class="picks d-flex align-items-center">
    <svg class="i11"><use href="#magp"/></svg><svg class="i11"><use href="#magw"/></svg><svg class="i11"><use href="#wq"/></svg><svg class="i11"><use href="#fitw"/></svg><svg class="i11"><use href="#rotv"/></svg><svg class="i11"><use href="#arrl"/></svg><svg class="i11"><use href="#cubes"/></svg><svg class="i11"><use href="#cubes2"/></svg>
    <svg class="i11" viewBox="0 0 12 12"><circle cx="6" cy="6" r="6" fill="#f3f7f9"/><path d="M3.500 6h5" stroke="#c9a25c" stroke-width="1.300"/></svg>
    <input type="range" class="zoomer" value="31" aria-label="Zoom">
    <svg class="i11" viewBox="0 0 12 12"><circle cx="6" cy="6" r="6" fill="#f3f7f9"/><path d="M3 6h6M6 3v6" stroke="#c9a25c" stroke-width="1.300"/></svg>
    <svg class="i11" viewBox="0 0 12 12"><rect y="2" width="12" height="8" rx="2" fill="#e0201b"/><path d="M5 4l3 2-3 2z" fill="#fff"/></svg>
    <svg class="i11" viewBox="0 0 12 12"><circle cx="6" cy="6" r="5" fill="#eee"/><circle cx="6" cy="6" r="3" fill="#b02a3a"/></svg>
    <svg class="i11 me-1" viewBox="0 0 12 12"><path d="M1 1h10v10H1z" fill="#f3eeea"/><path d="M6 9V3M4 5l2-2 2 2M3 10h6" fill="none" stroke="#c23a34" stroke-width="1.300"/></svg>
  </div>
</footer>
<div class="foot"></div>
<script>
// Quick access toolbar: a symbol name per button, "car" is a drop-down arrow
document.getElementById('quick').innerHTML = ['doc','car','open','pin','save','saveas','car','gear','print','car','book','undo','car','redo','car','loop','carbar']
  .map(n => `<button class="${n.startsWith('car') ? 'car' : ''}" aria-label="${n}"><svg class="${n.startsWith('car') ? '' : 'i11'}" width="7" height="7"><use href="#${n}"/></svg></button>`).join('');
</script>
</body>
</html>
